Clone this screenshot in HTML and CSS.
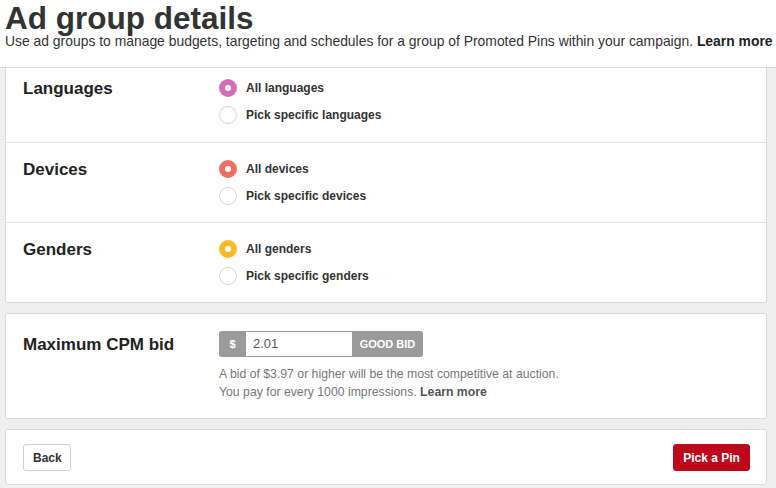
FILE: index.html
```html
<!DOCTYPE html>
<html>
<head>
<meta charset="utf-8">
<link rel="stylesheet" href="styles.css">
</head>
<body>
<header class="head">
  <h1 class="title">Ad group details</h1>
  <p class="subtitle">Use ad groups to manage budgets, targeting and schedules for a group of Promoted Pins within your campaign. <b>Learn more</b></p>
</header>
<main class="page">
  <section class="card card-top">
    <div class="row row-first">
      <div class="label">Languages</div>
      <div class="options">
        <div class="opt"><span class="radio on pink"></span><span>All languages</span></div>
        <div class="opt"><span class="radio"></span><span>Pick specific languages</span></div>
      </div>
    </div>
    <div class="row">
      <div class="label">Devices</div>
      <div class="options">
        <div class="opt"><span class="radio on coral"></span><span>All devices</span></div>
        <div class="opt"><span class="radio"></span><span>Pick specific devices</span></div>
      </div>
    </div>
    <div class="row row-last">
      <div class="label">Genders</div>
      <div class="options">
        <div class="opt"><span class="radio on amber"></span><span>All genders</span></div>
        <div class="opt"><span class="radio"></span><span>Pick specific genders</span></div>
      </div>
    </div>
  </section>

  <section class="card card-bid">
    <div class="label label-bid">Maximum CPM bid</div>
    <div class="bid">
      <div class="input-group">
        <span class="addon addon-cur">$</span>
        <span class="field">2.01</span>
        <span class="addon addon-tag">GOOD BID</span>
      </div>
      <p class="help">A bid of $3.97 or higher will be the most competitive at auction.<br>You pay for every 1000 impressions. <b>Learn more</b></p>
    </div>
  </section>

  <section class="card card-foot">
    <button class="btn btn-back">Back</button>
    <button class="btn btn-primary">Pick a Pin</button>
  </section>
</main>
</body>
</html>
```

FILE: styles.css
```css
html, body {
  margin: 0;
  padding: 0;
  background: #efefef;
  font-family: "Liberation Sans", Arial, sans-serif;
  color: #333;
}

.head {
  background: #fff;
  height: 68px;
  padding: 0 0 0 5px;
  border-bottom: 1px solid #dcdcdc;
  box-sizing: border-box;
  white-space: nowrap;
}

.title {
  margin: 0;
  font-size: 31.5px;
  line-height: 36px;
  font-weight: bold;
  color: #333;
}

.subtitle {
  margin: -3px 0 0;
  font-size: 13.9px;
  line-height: 16px;
  color: #333;
}

.subtitle b {
  color: #222;
}

.page {
  padding: 0 9px 4px 5px;
}

.card {
  background: #fff;
  border: 1px solid #dadada;
  border-radius: 3px;
}

.card-top {
  border-top: none;
  border-radius: 0 0 3px 3px;
}

.row {
  display: grid;
  grid-template-columns: 196px 1fr;
  padding: 17px 17px 17px;
  border-bottom: 1px solid #e4e4e4;
}

.row-first {
  padding-top: 11px;
  padding-bottom: 18px;
}

.row-last {
  border-bottom: none;
}

.label {
  font-size: 17px;
  font-weight: bold;
  line-height: 19px;
  color: #222;
}

.options {
  display: flex;
  flex-direction: column;
  gap: 9px;
}

.opt {
  display: flex;
  align-items: center;
  gap: 9px;
  height: 18px;
  font-size: 12px;
  font-weight: bold;
  color: #333;
}

.radio {
  width: 18px;
  height: 18px;
  border-radius: 50%;
  border: 1px solid #d4d4d4;
  box-sizing: border-box;
  background: #fff;
  position: relative;
  flex: none;
}

.radio.on {
  border: none;
}

.radio.on::after {
  content: "";
  position: absolute;
  left: 6px;
  top: 6px;
  width: 6px;
  height: 6px;
  border-radius: 50%;
  background: #fff;
}

.pink { background: #d36db6; }
.coral { background: #ef6f61; }
.amber { background: #fdb827; }

.card-bid {
  margin-top: 10px;
  display: grid;
  grid-template-columns: 196px 1fr;
  padding: 17px 17px 17px;
}

.label-bid {
  line-height: 27px;
}

.input-group {
  display: flex;
  height: 26px;
  width: 204px;
  border-radius: 3px;
  overflow: hidden;
}

.addon {
  background: #9b9b9b;
  color: #fff;
  font-size: 11px;
  font-weight: bold;
  display: flex;
  align-items: center;
  justify-content: center;
}

.addon-cur {
  width: 27px;
}

.addon-tag {
  width: 71px;
}

.field {
  flex: 1;
  border-top: 1px solid #9b9b9b;
  border-bottom: 1px solid #9b9b9b;
  box-sizing: border-box;
  padding-left: 7px;
  font-size: 13px;
  line-height: 24px;
  color: #555;
}

.help {
  margin: 8px 0 0;
  font-size: 12.25px;
  line-height: 18px;
  color: #777;
}

.help b {
  color: #555;
}

.card-foot {
  margin-top: 10px;
  display: flex;
  justify-content: space-between;
  padding: 14px 16px 13px 17px;
}

.btn {
  height: 27px;
  border-radius: 3px;
  font-family: "Liberation Sans", Arial, sans-serif;
  font-size: 12px;
  font-weight: bold;
  padding: 0 9px;
  cursor: pointer;
}

.btn-back {
  background: #fff;
  border: 1px solid #cfcfcf;
  color: #333;
  width: 48px;
}

.btn-primary {
  background: #bd081c;
  border: 1px solid #bd081c;
  color: #fff;
  width: 77px;
}
```
